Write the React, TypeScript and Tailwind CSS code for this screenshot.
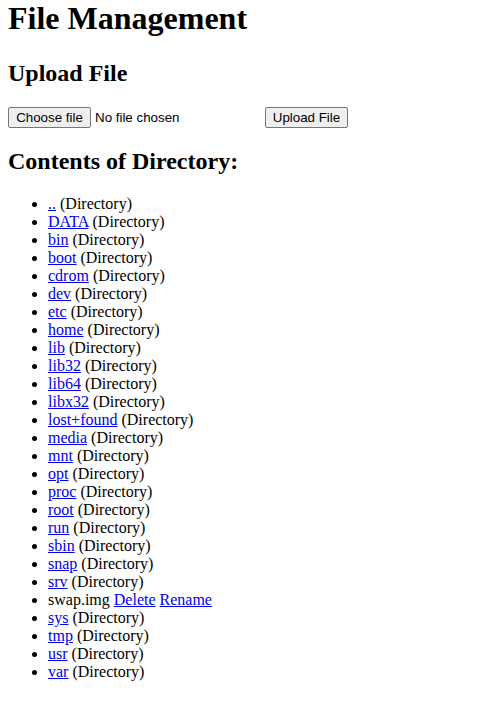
const entries: { name: string; dir: boolean }[] = [
  { name: "..", dir: true },
  { name: "DATA", dir: true },
  { name: "bin", dir: true },
  { name: "boot", dir: true },
  { name: "cdrom", dir: true },
  { name: "dev", dir: true },
  { name: "etc", dir: true },
  { name: "home", dir: true },
  { name: "lib", dir: true },
  { name: "lib32", dir: true },
  { name: "lib64", dir: true },
  { name: "libx32", dir: true },
  { name: "lost+found", dir: true },
  { name: "media", dir: true },
  { name: "mnt", dir: true },
  { name: "opt", dir: true },
  { name: "proc", dir: true },
  { name: "root", dir: true },
  { name: "run", dir: true },
  { name: "sbin", dir: true },
  { name: "snap", dir: true },
  { name: "srv", dir: true },
  { name: "swap.img", dir: false },
  { name: "sys", dir: true },
  { name: "tmp", dir: true },
  { name: "usr", dir: true },
  { name: "var", dir: true },
];

const link = "text-[#0000ee] underline";
const btn =
  "border border-[#767676] bg-[#efefef] rounded-[2px] h-[21px] leading-[normal] text-black text-[13.333px] text-center";

export default function App() {
  return (
    <div className="bg-white text-black px-2 pb-2 text-[16px] leading-[normal] font-['Liberation_Serif',serif]">
      <h1 className="text-[32px] font-bold leading-[normal] mb-[23.44px]">File Management</h1>

      <h2 className="text-[24px] font-bold leading-[normal] my-[19.92px]">Upload File</h2>
      <form className="flex items-center font-['Liberation_Sans',Arial,sans-serif] text-[13.333px]">
        <div className="flex items-center w-[257px]">
          <button type="button" className={btn + " w-[83px]"}>
            Choose file
          </button>
          <span className="ml-[4px]">No file chosen</span>
        </div>
        <button type="button" className={btn + " w-[83px]"}>
          Upload File
        </button>
      </form>

      <h2 className="text-[24px] font-bold leading-[normal] my-[19.92px]">Contents of Directory:</h2>
      <ul className="list-disc pl-10 my-4">
        {entries.map((e) => (
          <li key={e.name} className="leading-[18px]">
            {e.dir ? (
              <>
                <a href="#" className={link}>
                  {e.name}
                </a>{" "}
                (Directory)
              </>
            ) : (
              <>
                {e.name}{" "}
                <a href="#" className={link}>
                  Delete
                </a>{" "}
                <a href="#" className={link}>
                  Rename
                </a>
              </>
            )}
          </li>
        ))}
      </ul>
    </div>
  );
}
